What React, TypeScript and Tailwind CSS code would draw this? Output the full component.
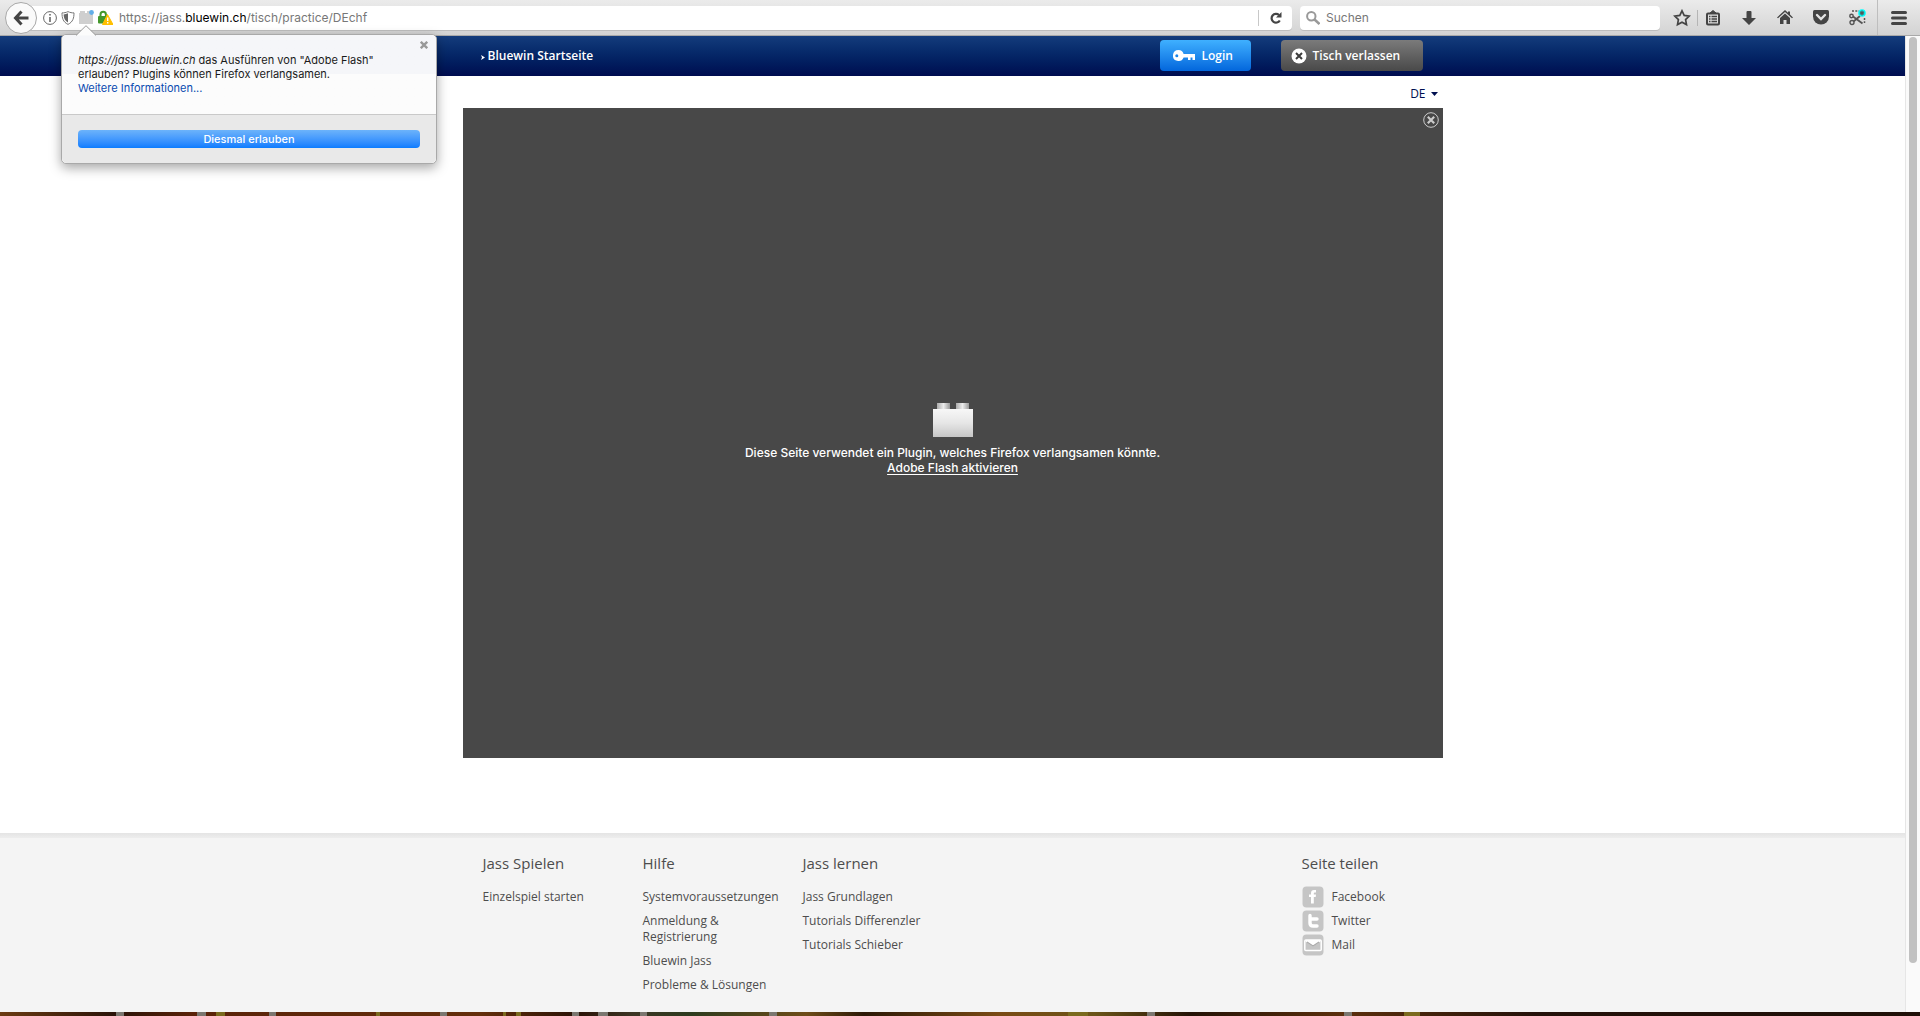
const footerColumns = [
  { title: "Jass Spielen", links: ["Einzelspiel starten"] },
  {
    title: "Hilfe",
    links: [
      "Systemvoraussetzungen",
      "Anmeldung & Registrierung",
      "Bluewin Jass",
      "Probleme & Lösungen",
    ],
  },
  {
    title: "Jass lernen",
    links: ["Jass Grundlagen", "Tutorials Differenzler", "Tutorials Schieber"],
  },
];

function BrowserToolbar() {
  return (
    <div className="relative z-10 flex h-9 shrink-0 items-center border-b border-[#a9a9a9] bg-linear-to-b from-[#ebebeb] to-[#d3d3d3] pl-[5px] text-[#4c4c4c]">
      <button
        aria-label="Zurück"
        className="z-10 flex size-8 shrink-0 items-center justify-center rounded-full border border-[#a8a8a8] bg-[#fafafa]"
      >
        <svg width="16" height="16" viewBox="0 0 16 16" fill="none" stroke="#444" strokeWidth="3">
          <path d="M8.5 1.5 2.5 8l6 6.5M3 8h12.5" />
        </svg>
      </button>
      <div className="-ml-2 flex h-6 flex-1 items-center rounded-r bg-white pl-[14px] shadow-[0_1px_0_#bdbdbd]">
        <div className="flex items-center gap-1">
          <svg width="14" height="14" viewBox="0 0 14 14" fill="none" stroke="#666">
            <circle cx="7" cy="7" r="6.4" />
            <path d="M7 6v5" strokeWidth="1.6" />
            <circle cx="7" cy="3.8" r=".5" fill="#666" />
          </svg>
          <svg width="14" height="14" viewBox="0 0 14 14">
            <path d="M7 .6c2 1 4 1.3 6 1.3 0 5-1 9-6 11.5C2 11 1 7 1 1.900c2 0 4-.3 6-1.300z" fill="#fff" stroke="#777" />
            <path d="M7 2.300v9.300C3.800 9.500 2.800 7 2.600 3.400 4.200 3.300 5.600 3 7 2.300z" fill="#666" />
          </svg>
          <svg width="15" height="15" viewBox="0 0 15 15">
            <path d="M1 1h5v2H1zM8 1h5v2H8zM0 3h14v11H0z" fill="#cfcfcf" />
            <circle cx="12.500" cy="2.500" r="2.400" fill="#62aee8" />
          </svg>
          <svg width="15" height="15" viewBox="0 0 15 15">
            <path d="M2.500 7V4.500a2.700 2.700 0 0 1 5.400 0V7" fill="none" stroke="#44982b" strokeWidth="2" />
            <rect x="0" y="6" width="10" height="7.500" rx="1" fill="#44982b" />
            <path d="M9.500 4.500 15 14.500H4.500z" fill="#ffbf00" stroke="#ffbf00" strokeLinejoin="round" />
            <path d="M9.700 7.500v3.500M9.700 12v1.500" stroke="#fff" strokeWidth="1.400" />
          </svg>
        </div>
        <div className="ml-[6px] flex-1 font-[Inter,sans-serif] text-[12px] text-[#777]">
          https://jass.<span className="text-black">bluewin.ch</span>/tisch/practice/DEchf
        </div>
        <button aria-label="Neu laden" className="flex h-4 w-[34px] items-center justify-center border-l border-[#c8c8c8]">
          <svg width="12" height="12" viewBox="0 0 12 12" fill="none">
            <path d="M9 3A4.400 4.400 0 1 0 9.800 8.500" stroke="#444" strokeWidth="2.200" />
            <path d="M11.500 0v5.500H6z" fill="#444" />
          </svg>
        </button>
      </div>
      <label className="ml-2 flex h-6 w-[360px] items-center gap-[6px] rounded bg-white px-[6px] shadow-[0_1px_0_#bdbdbd]">
        <svg width="14" height="14" viewBox="0 0 14 14" fill="none" stroke="#999" strokeWidth="2">
          <circle cx="5.300" cy="5.300" r="4.200" />
          <path d="m8.500 8.500 5 4.500" strokeWidth="2.600" />
        </svg>
        <input
          type="text"
          aria-label="Suchen"
          placeholder="Suchen"
          className="min-w-0 flex-1 font-[Inter,sans-serif] text-[12px] outline-none placeholder:text-[#777]"
        />
      </label>
      <div className="flex h-full items-center">
        <button aria-label="Lesezeichen" className="ml-3 flex h-4 w-[26px] items-center justify-center border-r border-[#b5b5b5] pr-[6px]">
          <svg width="18" height="18" viewBox="0 0 18 18" className="shrink-0" fill="none" stroke="#444" strokeWidth="1.700">
            <path d="m9 1.800 2.200 4.600 5 .7-3.600 3.500.9 5L9 13.200l-4.500 2.400.9-5L1.800 7.100l5-.7z" />
          </svg>
        </button>
        <button aria-label="Lesezeichen anzeigen" className="flex w-[30px] justify-center">
          <svg width="14" height="16" viewBox="0 0 14 16" fill="none" stroke="#444">
            <rect x="1" y="3.500" width="12" height="11" rx="1" strokeWidth="2" />
            <path d="M4 3h6L7 .500z" fill="#444" />
            <path d="M3 6.500h1.500M5.500 6.500H11M3 9h1.500M5.500 9H11M3 11.500h1.500M5.500 11.500H11" strokeWidth="1.300" />
          </svg>
        </button>
        <button aria-label="Downloads" className="flex w-[42px] justify-center">
          <svg width="14" height="14" viewBox="0 0 14 14" fill="#444">
            <path d="M4.500 1q0-1 1-1h3q1 0 1 1v6H14l-7 7-7-7h4.500z" />
          </svg>
        </button>
        <button aria-label="Startseite" className="flex w-[30px] justify-center">
          <svg width="16" height="15" viewBox="0 0 16 15" fill="#444">
            <path d="M8 0 0 7.500l1 .8L8 2l7 6.300 1-.8-3-2.900V1.500h-2v1.300z" />
            <path d="m8 3.500 5 4.600V14H9.500V10h-3v4H3V8.100z" />
          </svg>
        </button>
        <button aria-label="Pocket" className="flex w-[42px] justify-center">
          <svg width="16" height="15" viewBox="0 0 16 15" fill="none">
            <path d="M1.500 0h13Q16 0 16 1.500v5a8 8 0 0 1-16 0v-5Q0 0 1.500 0z" fill="#444" />
            <path d="m4 5 4 4 4-4" stroke="#e3e3e3" strokeWidth="2.400" strokeLinecap="round" />
          </svg>
        </button>
        <button aria-label="Bildschirmfoto" className="flex w-[30px] justify-center">
          <svg width="17" height="17" viewBox="0 0 17 17" fill="none" stroke="#555">
            <path d="M3 2h7M15.500 9v5" strokeWidth="1.500" strokeDasharray="2 1.300" />
            <circle cx="2.500" cy="7" r="1.700" strokeWidth="1.400" />
            <circle cx="3" cy="13.500" r="2" strokeWidth="1.400" />
            <path d="m4 7.500 9.500 7M4.500 12.500 11 7" strokeWidth="1.800" />
            <circle cx="13" cy="4" r="3.800" fill="#0ff" stroke="none" />
            <path d="M13 1.500v5M10.800 2.800l4.400 2.400M10.800 5.200l4.400-2.400" strokeWidth="1.300" />
          </svg>
        </button>
        <button aria-label="Menü" className="ml-[5px] flex h-full w-[43px] items-center justify-center border-l border-[#bebebe]">
          <svg width="16" height="14" viewBox="0 0 16 14" stroke="#444" strokeWidth="3" strokeLinecap="round">
            <path d="M1.500 1.500h13M1.500 7h13M1.500 12.500h13" />
          </svg>
        </button>
      </div>
      <PluginPopup />
    </div>
  );
}

function PluginPopup() {
  return (
    <div className="absolute top-[34px] left-[61px] w-[376px] rounded-[5px] border border-[#a9a9a9] bg-[#fcfcfc] font-[Inter,sans-serif] text-[11px] leading-[14px] text-[#1a1a1a] shadow-[0_4px_12px_rgba(0,0,0,0.35)]">
      <svg width="20" height="11" viewBox="0 0 20 11" className="absolute -top-[10px] left-[14px]">
        <path d="M0 10.500 10 .700l10 9.800" fill="#fcfcfc" stroke="#999" />
      </svg>
      <div className="flex h-[79px] rounded-t-[5px] bg-linear-to-b from-[#f5f6f9] from-50% to-[#fcfcfc] to-50% pt-[18px] pl-4">
        <p className="flex-1">
          <em>https://jass.bluewin.ch</em> das Ausführen von "Adobe Flash"
          <br />
          erlauben? Plugins können Firefox verlangsamen.
          <br />
          <a href="#" className="text-[#0a4bb0]">
            Weitere Informationen...
          </a>
        </p>
        <button aria-label="Schliessen" className="-mt-3 mr-2 size-2">
          <svg width="8" height="8" viewBox="0 0 8 8" stroke="#999" strokeWidth="2.400">
            <path d="m.8.8 6.400 6.400M7.200.8.800 7.200" />
          </svg>
        </button>
      </div>
      <div className="rounded-b-[5px] border-t border-[#c9c9c9] bg-[#e9e9e9] px-4 py-[15px]">
        <button className="block h-[18px] w-full rounded bg-linear-to-b from-[#6cb3fa] to-[#087cff] text-[11px] leading-[18px] font-medium text-white">
          Diesmal erlauben
        </button>
      </div>
    </div>
  );
}

function SiteHeader() {
  return (
    <header className="h-10 bg-linear-to-b from-[#143c7c] to-[#000c50] text-[12px] font-semibold text-white">
      <div className="mx-auto flex h-full w-[980px] items-center pb-px pl-[18px] pr-5">
        <a href="#" className="flex items-center gap-[3px]">
          <svg width="4" height="5" viewBox="0 0 4 5" fill="#fff" className="mt-[3px]">
            <path d="M0 0 4 2.500 0 5l1-2.500z" />
          </svg>
          Bluewin Startseite
        </a>
        <button className="ml-auto flex h-[31px] w-[91px] items-center gap-[7px] rounded bg-linear-to-b from-[#3fb0ff] to-[#0366dc] pl-[13px]">
          <svg width="22" height="12" viewBox="0 0 22 12">
            <path d="M5.500 0a5.500 5.500 0 0 1 5.100 4H22v6h-2.500V7.500h-2V10H15V7.500h-4.400A5.500 5.500 0 1 1 5.500 0z" fill="#fff" />
            <circle cx="3.800" cy="5.700" r="1.500" fill="#1d84e8" />
          </svg>
          Login
        </button>
        <button className="ml-[30px] flex h-[31px] w-[142px] items-center gap-[6px] rounded bg-linear-to-b from-[#7b7b7b] to-[#494949] pl-[10px]">
          <svg width="16" height="16" viewBox="0 0 16 16">
            <circle cx="8" cy="8" r="7.500" fill="#fff" />
            <path d="m5 5 6 6m0-6-6 6" stroke="#3c3c3c" strokeWidth="2" />
          </svg>
          Tisch verlassen
        </button>
      </div>
    </header>
  );
}

function PluginPlaceholder() {
  return (
    <div className="flex h-[650px] flex-col bg-[#484848] text-center font-[Inter,sans-serif] text-[12px] leading-[15px] font-medium text-white">
      <button aria-label="Plugin schliessen" className="mt-1 mr-1 self-end">
        <svg width="16" height="16" viewBox="0 0 16 16" fill="none" stroke="#ccc">
          <circle cx="8" cy="8" r="7.300" />
          <path d="m4.800 4.800 6.400 6.400m0-6.400-6.400 6.400" strokeWidth="2.200" />
        </svg>
      </button>
      <div className="flex flex-1 flex-col items-center pt-[275px]">
        <svg width="40" height="34" viewBox="0 0 40 34">
          <defs>
            <linearGradient id="brick" x2="0" y2="1">
              <stop offset="0" stopColor="#f7f7f7" />
              <stop offset="0.500" stopColor="#e6e6e6" />
              <stop offset="1" stopColor="#c6c6c6" />
            </linearGradient>
            <linearGradient id="knob">
              <stop offset="0" stopColor="#aaa" />
              <stop offset="0.500" stopColor="#ececec" />
              <stop offset="1" stopColor="#999" />
            </linearGradient>
          </defs>
          <path d="M4 0h13v6H4z" fill="url(#knob)" />
          <path d="M23 0h13v6H23z" fill="url(#knob)" />
          <path d="M0 6h40v28H0z" fill="url(#brick)" />
        </svg>
        <p className="mt-2">Diese Seite verwendet ein Plugin, welches Firefox verlangsamen könnte.</p>
        <a href="#" className="underline underline-offset-2">
          Adobe Flash aktivieren
        </a>
      </div>
    </div>
  );
}

function FooterHeading({ children }: { children: string }) {
  return <h2 className="mb-4 text-[15px] leading-5">{children}</h2>;
}

function SiteFooter() {
  return (
    <footer className="flex-1 bg-[#f4f4f4] text-[12px] leading-4 text-[#4d4d4d]">
      <div className="h-[5px] bg-linear-to-b from-[#e4e4e4] to-[#ededed]" />
      <div className="mx-auto flex w-[980px] pt-[15px] pl-5">
        {footerColumns.map((column) => (
          <div key={column.title} className="w-40 pr-6">
            <FooterHeading>{column.title}</FooterHeading>
            <ul className="flex flex-col gap-2">
              {column.links.map((link) => (
                <li key={link}>
                  <a href="#">{link}</a>
                </li>
              ))}
            </ul>
          </div>
        ))}
        <div className="ml-auto w-[141px]">
          <FooterHeading>Seite teilen</FooterHeading>
          <ul className="-mt-[3px] flex flex-col gap-[2px]">
            <li>
              <a href="#" className="flex items-center gap-2">
                <svg width="22" height="22" viewBox="0 0 22 22">
                  <rect x=".5" y=".5" width="21" height="21" rx="4" fill="#c5c5c5" />
                  <path d="M9 17.500v-6.500H7V8.500h2V7q0-3 3-3h2v2.500h-1.200q-1 0-1 1v1H14l-.3 2.500h-1.900v6.500z" fill="#fff" />
                </svg>
                Facebook
              </a>
            </li>
            <li>
              <a href="#" className="flex items-center gap-2">
                <svg width="22" height="22" viewBox="0 0 22 22">
                  <rect x=".5" y=".5" width="21" height="21" rx="4" fill="#c5c5c5" />
                  <path d="M8 5.500v7.500q0 3 3 3h4M8 9h7" fill="none" stroke="#fff" strokeWidth="3.400" strokeLinecap="round" />
                </svg>
                Twitter
              </a>
            </li>
            <li>
              <a href="#" className="flex items-center gap-2">
                <svg width="22" height="22" viewBox="0 0 22 22">
                  <rect x=".5" y=".5" width="21" height="21" rx="4" fill="#c5c5c5" />
                  <rect x="2.800" y="6" width="16.400" height="10.500" rx="1" fill="#c5c5c5" stroke="#fff" strokeWidth="1.500" />
                  <path d="m3.500 7.500 7.500 5 7.500-5v-1.500h-15z" fill="#fff" />
                  <path d="m5 8 6 4 6-4" fill="none" stroke="#aaa" strokeWidth="1.200" />
                </svg>
                Mail
              </a>
            </li>
          </ul>
        </div>
      </div>
    </footer>
  );
}

function DesktopStrip() {
  return (
    <svg width="100%" height="4" viewBox="0 0 1920 4" preserveAspectRatio="none" className="block shrink-0">
      <defs>
        <linearGradient id="desktop">
          <stop offset="0" stopColor="#6b3b12" />
          <stop offset=".06" stopColor="#2a1208" />
          <stop offset=".1" stopColor="#5a2208" />
          <stop offset=".25" stopColor="#642e0b" />
          <stop offset=".3" stopColor="#2b1206" />
          <stop offset=".33" stopColor="#3c3524" />
          <stop offset=".36" stopColor="#2d3b1e" />
          <stop offset=".42" stopColor="#6e4c18" />
          <stop offset=".45" stopColor="#2c1806" />
          <stop offset=".52" stopColor="#7a4a14" />
          <stop offset=".57" stopColor="#6b5418" />
          <stop offset=".62" stopColor="#241206" />
          <stop offset=".7" stopColor="#5c2f0c" />
          <stop offset=".8" stopColor="#24110a" />
          <stop offset="1" stopColor="#1f1008" />
        </linearGradient>
      </defs>
      <path d="M0 0h1920v4H0z" fill="url(#desktop)" />
      <path d="M116 0h8v4h-8zM197 0h9v4h-9zM269 0h7v4h-7zM440 0h7v4h-7zM572 0h7v4h-7zM598 0h10v4h-10zM640 0h7v4h-7zM769 0h8v4h-8zM1147 0h8v4h-8zM1344 0h8v4h-8z" fill="#7b7770" />
      <path d="M216 0h9v4h-9zM376 0h4v4h-4zM503 0h3v4h-3zM516 0h5v4h-5zM1068 0h20v4h-20zM1404 0h16v4h-16z" fill="#7a6a1e" />
    </svg>
  );
}

function App() {
  return (
    <div className="flex min-h-screen flex-col bg-white">
      <BrowserToolbar />
      <div className="flex flex-1">
        <div className="flex min-w-0 flex-1 flex-col font-['Trebuchet_MS','Open_Sans',sans-serif]">
          <SiteHeader />
          <main className="mx-auto w-[980px] pb-[75px]">
            <div className="flex h-8 items-center justify-end pt-1 pr-[5px]">
              <button className="flex items-center gap-[5px] text-[12px] text-[#000f50]">
                DE
                <svg width="7" height="4" viewBox="0 0 7 4" fill="#000f50">
                  <path d="M0 0h7L3.500 4z" />
                </svg>
              </button>
            </div>
            <PluginPlaceholder />
          </main>
          <SiteFooter />
        </div>
        <div className="w-[15px] border-l border-[#e6e6e6] bg-[#fafafa] px-[3px] pt-px">
          <div className="h-[95%] w-2 rounded-full bg-[#c1c1c1]" />
        </div>
      </div>
      <DesktopStrip />
    </div>
  );
}

export default App;
